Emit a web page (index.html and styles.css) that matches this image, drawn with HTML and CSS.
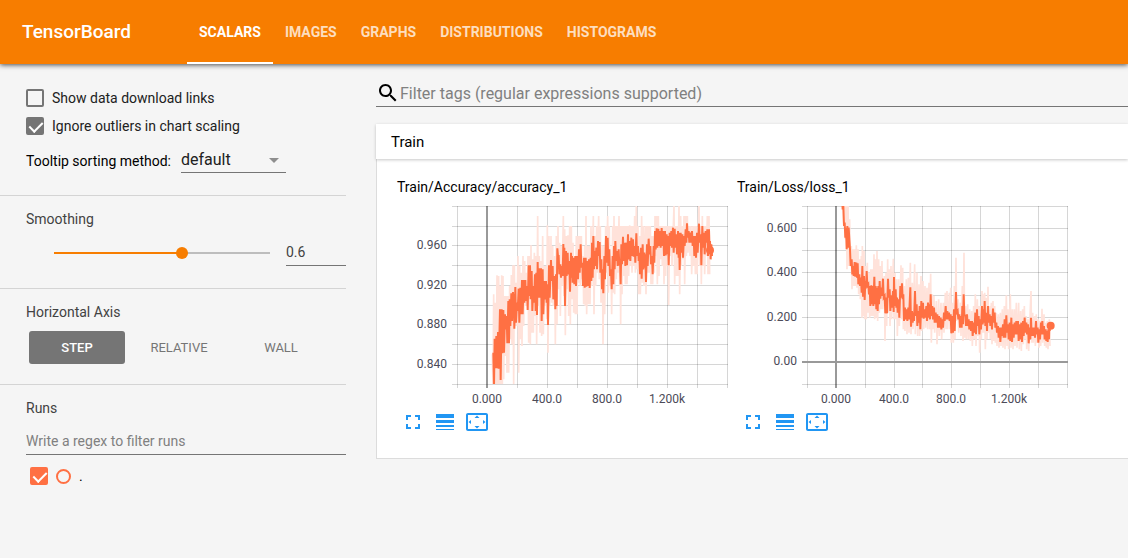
FILE: index.html
```html
<!DOCTYPE html>
<html lang="en">
<head>
<meta charset="utf-8">
<title>TensorBoard</title>
<link rel="stylesheet" href="styles.css">
</head>
<body>
<header class="toolbar">
  <h1 class="brand">TensorBoard</h1>
  <nav class="tabs">
    <a class="tab tab-active" href="#scalars">SCALARS</a>
    <a class="tab" href="#images">IMAGES</a>
    <a class="tab" href="#graphs">GRAPHS</a>
    <a class="tab" href="#distributions">DISTRIBUTIONS</a>
    <a class="tab" href="#histograms">HISTOGRAMS</a>
  </nav>
</header>
<div class="layout">
  <aside class="sidebar">
    <section class="panel panel-options">
      <label class="check-row"><input class="check" type="checkbox">Show data download links</label>
      <label class="check-row"><input class="check" type="checkbox" checked>Ignore outliers in chart scaling</label>
      <div class="sort-row">
        <label for="sort">Tooltip sorting method:</label>
        <span class="select-box">
          <select class="select" id="sort"><option>default</option><option>ascending</option><option>descending</option><option>nearest</option></select>
          <svg class="select-arrow" width="12" height="6" viewBox="0 0 12 6" aria-hidden="true"><path d="M1 0h10L6 5z" fill="#8e8e8e"/></svg>
        </span>
      </div>
    </section>
    <section class="panel panel-smoothing">
      <label class="panel-title" for="smooth">Smoothing</label>
      <div class="slider-row">
        <input class="slider" id="smooth" type="range" min="0" max="1" step="0.001" value="0.6">
        <input class="slider-value" type="text" value="0.6" aria-label="Smoothing value">
      </div>
    </section>
    <section class="panel panel-axis">
      <h2 class="panel-title">Horizontal Axis</h2>
      <div class="axis-row">
        <button class="axis-button axis-selected" type="button">STEP</button>
        <button class="axis-button" type="button">RELATIVE</button>
        <button class="axis-button" type="button">WALL</button>
      </div>
    </section>
    <section class="panel panel-runs">
      <label class="panel-title" for="runs">Runs</label>
      <input class="runs-filter" id="runs" type="text" placeholder="Write a regex to filter runs">
      <div class="run">
        <input class="check check-run" id="run-root" type="checkbox" checked>
        <button class="run-dot" type="button" aria-label="Select only this run"></button>
        <label for="run-root">.</label>
      </div>
    </section>
  </aside>
  <main class="content">
    <div class="search">
      <svg class="search-icon" width="24" height="24" viewBox="0 0 24 24" aria-hidden="true"><path d="M15.5 14h-.79l-.28-.27C15.41 12.59 16 11.11 16 9.5 16 5.91 13.09 3 9.5 3S3 5.91 3 9.5 5.91 16 9.5 16c1.61 0 3.09-.59 4.23-1.57l.27.28v.79l5 4.99L20.49 19l-4.99-5zm-6 0C7.01 14 5 11.99 5 9.5S7.01 5 9.5 5 14 7.01 14 9.5 11.99 14 9.5 14z"/></svg>
      <input class="search-input" type="text" aria-label="Filter tags" placeholder="Filter tags (regular expressions supported)">
    </div>
    <section class="group">
      <button class="group-header" type="button">Train</button>
      <div class="cards">
        <article class="card">
          <h3 class="card-title">Train/Accuracy/accuracy_1</h3>
          <svg class="chart" id="accuracy" width="331" height="208" viewBox="0 0 331 208">
            <g class="y-labels"><text x="50" y="49">0.960</text><text x="50" y="89">0.920</text><text x="50" y="128">0.880</text><text x="50" y="168">0.840</text></g>
            <g class="x-labels"><text x="90" y="203">0.000</text><text x="150" y="203">400.0</text><text x="210" y="203">800.0</text><text x="270" y="203">1.200k</text></g>
          </svg>
          <div class="actions">
            <button class="action" type="button" aria-label="Toggle full size"><svg width="24" height="24" viewBox="0 0 24 24"><path d="M7 14H5v5h5v-2H7v-3zm-2-4h2V7h3V5H5v5zm12 7h-3v2h5v-5h-2v3zM14 5v2h3v3h2V5h-5z"/></svg></button>
            <button class="action" type="button" aria-label="Toggle y-axis log scale"><svg width="24" height="24" viewBox="0 0 24 24"><path d="M3 4h18v4H3zM3 10h18v3H3zM3 15h18v2H3zM3 19h18v1H3z"/></svg></button>
            <button class="action" type="button" aria-label="Fit domain to data"><svg width="24" height="24" viewBox="0 0 24 24"><path d="M12 5.500l2.500 2.500h-5L12 5.500zM18 10l2.500 2.000L18 14V10zM6 10v4l-2.500-2L6 10zM14.500 16h-5L12 18.500 14.500 16zM21 3H3c-1.100 0-2 .9-2 2v14c0 1.100.9 2 2 2h18c1.100 0 2-.9 2-2V5c0-1.100-.9-2-2-2zm0 16H3V5h18v14z"/></svg></button>
          </div>
        </article>
        <article class="card">
          <h3 class="card-title">Train/Loss/loss_1</h3>
          <svg class="chart" id="loss" width="331" height="208" viewBox="0 0 331 208">
            <g class="y-labels"><text x="60" y="32">0.600</text><text x="60" y="76">0.400</text><text x="60" y="121">0.200</text><text x="60" y="165">0.00</text></g>
            <g class="x-labels"><text x="99" y="203">0.000</text><text x="157" y="203">400.0</text><text x="214" y="203">800.0</text><text x="272" y="203">1.200k</text></g>
          </svg>
          <div class="actions">
            <button class="action" type="button" aria-label="Toggle full size"><svg width="24" height="24" viewBox="0 0 24 24"><path d="M7 14H5v5h5v-2H7v-3zm-2-4h2V7h3V5H5v5zm12 7h-3v2h5v-5h-2v3zM14 5v2h3v3h2V5h-5z"/></svg></button>
            <button class="action" type="button" aria-label="Toggle y-axis log scale"><svg width="24" height="24" viewBox="0 0 24 24"><path d="M3 4h18v4H3zM3 10h18v3H3zM3 15h18v2H3zM3 19h18v1H3z"/></svg></button>
            <button class="action" type="button" aria-label="Fit domain to data"><svg width="24" height="24" viewBox="0 0 24 24"><path d="M12 5.500l2.500 2.500h-5L12 5.500zM18 10l2.500 2.000L18 14V10zM6 10v4l-2.500-2L6 10zM14.500 16h-5L12 18.500 14.500 16zM21 3H3c-1.100 0-2 .9-2 2v14c0 1.100.9 2 2 2h18c1.100 0 2-.9 2-2V5c0-1.100-.9-2-2-2zm0 16H3V5h18v14z"/></svg></button>
          </div>
        </article>
      </div>
    </section>
  </main>
</div>
<script src="charts.js"></script>
</body>
</html>
```

FILE: styles.css
```css
* { box-sizing: border-box; }

body {
  margin: 0;
  min-height: 100vh;
  background: #f5f5f5;
  color: #212121;
  font: 14px/20px Roboto, sans-serif;
}

h1, h2, h3 { margin: 0; font-weight: 400; }

input, select, button { font: inherit; color: inherit; border-radius: 0; }

button { border: 0; padding: 0; background: none; cursor: pointer; }

input:focus, select:focus { outline: none; }

.toolbar {
  position: relative;
  display: flex;
  height: 64px;
  padding-left: 22px;
  background: #f77d00;
  color: #fff;
  box-shadow: 0 1px 5px rgba(0, 0, 0, 0.7);
}

.brand {
  width: 165px;
  font-size: 19px;
  font-weight: 500;
  line-height: 64px;
}

.tabs { display: flex; }

.tab {
  padding: 0 12px;
  color: rgba(255, 255, 255, 0.75);
  font-weight: 700;
  line-height: 64px;
  text-decoration: none;
}

.tab-active { color: #fff; box-shadow: inset 0 -2px #fff; }

.layout { display: flex; align-items: flex-start; }

.sidebar { flex: none; width: 346px; padding-top: 20px; }

.panel { padding: 0 0 0 26px; }

.panel + .panel { border-top: 1px solid #d4d4d4; padding-top: 13px; }

.panel-title { display: block; color: #424242; font-size: 14px; }

.panel-options { padding-bottom: 22px; }

.check-row { display: flex; align-items: center; gap: 8px; height: 28px; }

.check {
  appearance: none;
  display: grid;
  place-items: start center;
  flex: none;
  width: 18px;
  height: 18px;
  margin: 0;
  padding-left: 2px;
  border: 2px solid #757575;
  border-radius: 2px;
}

.check:checked { background: #757575; }

.check:checked::before {
  content: "";
  width: 6px;
  height: 11px;
  border: solid #fff;
  border-width: 0 2px 2px 0;
  transform: rotate(45deg);
}

.sort-row { display: flex; gap: 10px; height: 33px; padding-top: 11px; color: #000; }

.select-box { display: grid; align-items: center; width: 105px; height: 24px; margin-top: -2px; }

.select {
  grid-area: 1 / 1;
  appearance: none;
  height: 24px;
  padding: 0 0 2px;
  border: 0;
  border-bottom: 1px solid #757575;
  background: none;
  color: #212121;
  font-size: 16px;
  line-height: 20px;
}

.select-arrow { grid-area: 1 / 1; justify-self: end; margin-right: 6px; pointer-events: none; }

.panel-smoothing { padding-bottom: 22px; }

.slider-row { display: flex; align-items: flex-start; gap: 16px; padding: 12px 0 0 28px; }

.slider {
  appearance: none;
  flex: 1;
  min-width: 0;
  height: 12px;
  margin: 6px 0 0;
  background: linear-gradient(90deg, #f77d00 60%, #bdbdbd 60%) center / 100% 2px no-repeat;
}

.slider::-webkit-slider-thumb {
  appearance: none;
  width: 12px;
  height: 12px;
  border-radius: 50%;
  background: #f77d00;
}

.slider-value {
  width: 60px;
  height: 25px;
  padding: 0 0 2px;
  border: 0;
  border-bottom: 1px solid #757575;
  background: none;
  color: #424242;
}

.panel-axis { padding-bottom: 20px; }

.axis-row { display: flex; gap: 6px; padding: 9px 17px 0 3px; }

.axis-button { flex: 1; height: 33px; border-radius: 3px; color: #757575; font-size: 13px; }

.axis-selected { background: #757575; color: #fff; font-weight: 500; }

.runs-filter {
  display: block;
  width: 100%;
  height: 25px;
  margin-top: 12px;
  padding: 0 0 2px;
  border: 0;
  border-bottom: 1px solid #757575;
  background: none;
}

.runs-filter::placeholder, .search-input::placeholder { color: #808080; opacity: 1; }

.run { display: flex; align-items: center; gap: 8px; padding: 11px 0 0 4px; color: #000; }

.check-run, .check-run:checked { border-color: #ff7043; }

.check-run:checked { background: #ff7043; }

.run-dot { width: 15px; height: 15px; border: 2px solid #ff7043; border-radius: 50%; }

.content { flex: 1; min-width: 0; padding: 17px 0 0 30px; }

.search { display: flex; height: 26px; border-bottom: 1px solid #757575; }

.search-icon { flex: none; }

.search-input {
  flex: 1;
  min-width: 0;
  height: 24px;
  padding: 0;
  border: 0;
  background: none;
  font-size: 16px;
}

.group { margin-top: 17px; }

.group-header {
  position: relative;
  display: block;
  width: 100%;
  height: 35px;
  padding-left: 15px;
  background: #fff;
  box-shadow: 0 1px 3px rgba(0, 0, 0, 0.22);
  color: #000;
  font-size: 15px;
  text-align: left;
}

.cards {
  display: flex;
  flex-wrap: wrap;
  gap: 9px;
  padding: 18px 0 24px 20px;
  border: solid #dcdcdc;
  border-width: 0 0 1px 1px;
  background: #fff;
}

.card { width: 331px; }

.card-title { color: #000; font-size: 14px; line-height: 20px; }

.chart { display: block; margin-top: 3px; }

.chart text { font: 12px Roboto, sans-serif; fill: #4c4b58; }

.y-labels { text-anchor: end; }

.x-labels { text-anchor: middle; }

.grid { fill: #000; fill-opacity: 0.16; }

.zero { fill: #999; }

.raw { fill: none; stroke: #ffe2da; stroke-width: 5; }

.smooth { fill: none; stroke: #ff7043; stroke-width: 6; }

.last { fill: #ff7043; }

.actions { display: flex; gap: 8px; padding: 2px 0 0 4px; }

.action { width: 24px; height: 24px; }

.action svg { display: block; fill: #2196f3; }
```

FILE: charts.js
```javascript
// Series are "x,high,low" triples in thirds of a pixel, relative to the plot area.
var charts = {
  accuracy: {
    left: 60, width: 270, zeroX: 90, last: [759, 133],
    cols: [0, 90, 180, 270, 360, 450, 540, 630, 720, 810],
    rows: [0, 60, 118, 178, 237, 296, 355, 415, 474, 534],
    raw: "106,445,540;110,265,540;115,290,540;120,208,540;125,210,540;130,240,540;134,208,540;138,210,520;143,270,450;148,270,500;153,270,500;158,240,400;163,207,415;168,178,540;172,178,360;177,230,360;183,150,500;188,180,400;193,200,420;198,150,360;203,165,300;208,200,300;213,150,410;218,150,415;222,118,380;227,160,380;232,140,330;237,150,415;242,30,300;247,150,380;252,165,390;257,90,385;262,180,300;267,180,340;271,58,440;276,90,300;282,90,290;287,120,300;293,150,415;298,90,355;303,60,250;308,110,330;313,120,240;319,30,270;323,70,388;328,90,250;333,88,330;338,60,355;343,60,280;348,110,320;353,150,325;358,90,325;363,90,230;368,90,240;373,90,220;378,150,295;383,120,300;387,30,325;392,120,295;397,120,295;402,60,240;409,30,325;414,90,240;419,60,200;425,30,220;430,60,290;436,118,415;441,120,325;446,60,200;452,30,260;457,60,240;462,150,325;467,60,260;471,30,265;476,60,220;481,60,200;486,30,240;489,60,355;493,60,265;498,60,210;503,60,235;508,60,235;513,60,210;518,58,180;523,60,200;528,60,180;533,30,200;538,0,190;543,60,265;548,90,265;554,30,230;559,60,240;565,60,265;570,60,200;575,60,200;580,60,235;585,90,235;590,90,200;594,30,150;599,30,235;604,30,210;609,60,160;614,60,180;619,60,235;624,60,210;629,60,180;633,60,297;638,60,150;643,60,180;651,0,235;656,60,210;661,60,210;666,0,265;671,30,180;676,60,160;681,30,235;686,30,150;691,30,140;697,60,150;702,60,205;708,60,180;713,60,205;718,60,205;726,0,180;731,60,235;736,30,180;741,60,205;746,60,150;751,30,205;756,30,205",
    smooth: "109,440,540;113,398,487;118,390,487;123,378,488;129,310,522;134,310,442;139,312,440;144,325,370;149,330,412;154,285,412;158,280,360;163,262,345;168,258,330;170,265,368;175,243,350;180,290,315;185,248,350;190,245,325;195,222,325;200,222,290;205,222,285;210,240,312;215,178,270;219,178,280;224,195,315;229,240,290;234,205,315;238,200,327;242,168,275;247,187,275;252,187,345;257,190,325;262,225,280;267,225,290;271,235,357;276,178,275;282,162,225;287,180,280;293,210,310;297,205,300;301,127,150;305,150,205;310,175,215;315,180,210;319,114,195;322,125,300;327,135,210;332,140,205;337,165,257;342,140,215;345,150,230;350,155,235;355,150,240;361,150,220;366,130,200;371,115,185;376,170,240;381,155,245;386,155,242;391,165,240;396,160,246;401,155,225;405,110,215;409,90,190;413,135,180;418,125,190;423,105,150;428,108,200;433,160,250;437,190,262;442,150,220;447,90,170;452,95,180;457,130,210;462,190,250;467,150,235;471,120,190;475,105,165;480,135,180;485,130,178;489,160,235;493,115,175;498,92,165;503,110,180;508,110,178;513,85,160;518,105,165;523,95,150;528,100,152;533,120,170;538,82,150;543,120,165;547,140,205;552,125,218;557,115,190;562,140,185;565,145,228;570,115,180;575,98,145;580,120,175;585,150,205;590,120,170;594,75,130;599,67,125;604,68,120;609,75,125;614,66,120;619,75,150;624,75,148;629,85,145;633,90,178;638,80,120;643,75,125;648,65,140;653,68,125;658,85,145;663,75,155;666,80,192;671,80,140;676,85,155;681,90,120;686,70,110;690,52,95;695,75,110;700,80,110;705,75,120;710,90,150;715,90,155;720,80,140;726,53,110;731,85,178;736,60,125;741,80,145;746,75,110;751,70,150;756,70,140;759,105,160;763,115,150"
  },
  loss: {
    left: 70, width: 260, zeroX: 87, zeroY: 466, last: [731, 359],
    cols: [0, 87, 173, 260, 346, 433, 520, 606, 693, 780],
    rows: [0, 66, 133, 199, 267, 333, 399, 466, 534],
    raw: "108,-30,50;113,-30,100;118,-30,190;123,-30,180;128,40,180;133,120,250;138,130,240;143,130,240;148,118,245;153,130,265;158,160,280;163,150,335;166,120,330;171,135,340;176,180,340;181,170,320;186,200,335;191,190,330;196,190,330;201,145,340;206,160,335;210,135,345;215,160,320;220,180,310;225,165,310;232,210,405;237,200,360;242,160,320;247,190,360;252,180,340;259,158,340;264,200,340;269,220,390;275,220,360;282,178,340;287,185,370;292,240,375;298,220,385;304,215,380;310,170,385;316,230,370;323,175,385;330,200,390;336,235,390;342,210,375;348,225,370;354,240,365;360,245,370;366,230,370;371,203,410;376,265,370;381,270,380;388,285,415;395,280,390;402,290,400;409,290,380;415,260,370;420,255,370;427,260,370;431,245,410;437,290,410;442,240,400;447,155,345;453,280,380;460,290,390;466,240,405;471,140,395;476,300,400;482,295,400;488,310,405;494,315,420;500,300,400;505,265,420;511,280,390;516,300,440;521,300,400;525,255,380;529,265,380;533,260,430;538,275,400;543,242,380;548,300,400;553,290,415;558,285,405;563,300,410;568,320,420;574,325,425;580,320,420;586,310,425;592,300,430;598,268,420;603,310,430;610,265,425;616,310,430;622,310,420;628,290,425;635,290,430;641,315,435;647,310,415;652,300,400;657,330,430;663,340,435;672,255,410;677,320,410;683,330,420;688,325,410;694,340,425;699,345,420;705,308,410;711,325,420;716,350,425;721,345,430;727,340,420",
    smooth: "105,-30,10;109,0,60;113,50,95;117,65,130;121,60,125;125,65,100;129,130,180;134,160,205;138,180,210;143,168,212;148,170,215;152,172,235;157,205,240;162,215,260;166,180,272;171,210,282;175,225,245;179,195,240;184,235,265;188,240,300;193,238,295;197,240,300;202,212,295;206,240,310;210,245,315;214,240,295;218,225,278;223,245,270;228,218,275;233,270,322;238,275,322;243,218,275;248,250,315;253,268,305;258,255,318;261,213,300;266,250,305;270,275,320;275,280,335;280,240,275;285,232,280;289,265,345;294,305,340;299,310,345;304,305,340;310,244,362;315,315,350;319,320,345;324,255,330;329,295,360;334,315,350;338,300,370;343,285,335;348,290,338;353,310,335;358,300,345;363,290,335;367,295,340;371,265,330;376,300,340;381,305,350;386,320,350;391,325,365;396,330,365;401,335,370;406,340,365;411,320,345;416,300,340;421,315,340;426,320,345;431,325,382;436,330,380;441,310,375;447,258,320;452,315,340;457,325,365;462,330,365;466,300,355;470,265,325;475,330,360;480,325,360;485,340,370;490,345,375;495,345,390;500,350,380;505,320,385;510,310,360;515,330,385;520,340,370;525,300,355;529,310,350;533,285,360;538,320,375;543,300,350;548,325,360;553,330,370;558,308,350;563,320,365;568,350,380;573,360,395;578,365,408;583,365,390;588,355,395;593,340,395;598,328,380;603,355,400;608,350,405;613,335,408;618,355,395;623,350,385;628,345,385;633,345,405;638,355,400;643,350,408;648,345,390;653,335,380;658,350,385;663,355,412;668,365,400;672,335,390;677,365,390;682,365,395;687,345,385;692,365,410;697,370,400;702,350,385;706,345,385;711,360,400;716,370,405;720,375,408;724,370,400;727,365,375"
  }
};

var TOP = 6, HEIGHT = 178;

function add(parent, name, attrs) {
  var node = document.createElementNS("http://www.w3.org/2000/svg", name);
  for (var key in attrs) node.setAttribute(key, attrs[key]);
  parent.appendChild(node);
  return node;
}

function zigzag(series) {
  return series.split(";").map(function (triple) {
    var p = triple.split(",").map(Number);
    return p[0] + "," + p[1] + " " + (p[0] + 2) + "," + p[2];
  }).join(" ");
}

Object.keys(charts).forEach(function (id) {
  var c = charts[id], svg = document.getElementById(id);
  c.cols.forEach(function (u) {
    var zero = u === c.zeroX;
    add(svg, "rect", { "class": zero ? "zero" : "grid", x: c.left + Math.round(u / 3) - (zero ? 1 : 0), y: TOP, width: zero ? 2 : 1, height: HEIGHT + 4 });
  });
  c.rows.forEach(function (u) {
    var zero = u === c.zeroY;
    add(svg, "rect", { "class": zero ? "zero" : "grid", x: c.left - 5, y: TOP + Math.round(u / 3), width: c.width + 6, height: zero ? 2 : 1 });
  });
  var plot = add(svg, "svg", { x: c.left, y: TOP, width: c.width, height: HEIGHT, viewBox: "0 0 " + c.width * 3 + " " + HEIGHT * 3 });
  add(plot, "polyline", { "class": "raw", points: zigzag(c.raw) });
  add(plot, "polyline", { "class": "smooth", points: zigzag(c.smooth) });
  add(plot, "circle", { "class": "last", cx: c.last[0], cy: c.last[1], r: 12 });
});
```
